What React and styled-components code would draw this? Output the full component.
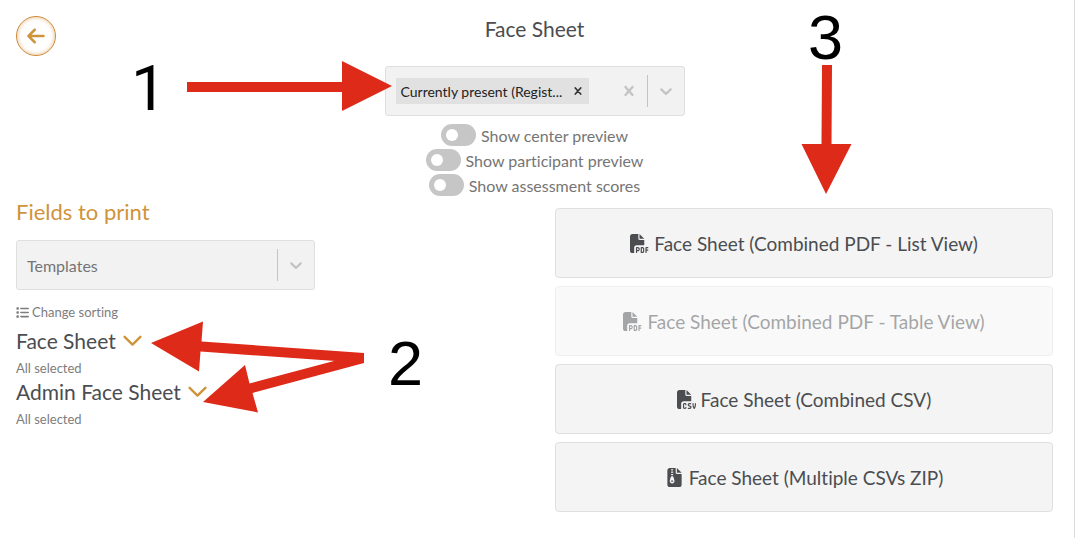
import React, { useState } from "react";
import styled, { createGlobalStyle } from "styled-components";
import {
  FaArrowLeft,
  FaFileCsv,
  FaFilePdf,
  FaFileZipper,
  FaList,
} from "react-icons/fa6";

const GlobalStyle = createGlobalStyle`
  * {
    box-sizing: border-box;
  }

  body {
    margin: 0;
    background: #fff;
    color: #4b4d50;
    font-family: Lato, "Open Sans", sans-serif;
    font-variant-ligatures: none;
  }

  button, input, select {
    font: inherit;
    font-variant-ligatures: none;
    color: inherit;
    margin: 0;
    padding: 0;
    border: 0;
    background: none;
  }

  button {
    cursor: pointer;
  }
`;

const Page = styled.main`
  position: relative;
  min-height: 100vh;
  margin-right: 1px;
  padding: 16px 21px 16px 16px;
  border-right: 1px solid #dcdcdc;
`;

const Header = styled.header`
  display: grid;
  grid-template-columns: 40px 1fr 40px;
  height: 50px;
`;

const BackLink = styled.a`
  display: flex;
  align-items: center;
  justify-content: center;
  width: 40px;
  height: 40px;
  border: 1px solid #cf8a35;
  border-radius: 50%;
  box-shadow: inset 0 0 4px #e3b98a;
  color: #cf933c;
  font-size: 20px;
`;

const Title = styled.h1`
  margin: 0;
  font-size: 21px;
  font-weight: 400;
  line-height: 26px;
  text-align: center;
`;

const Filters = styled.section`
  display: flex;
  flex-direction: column;
  align-items: center;
`;

const Control = styled.div`
  display: flex;
  align-items: center;
  width: ${({ $width }) => $width};
  height: 50px;
  padding-left: 10px;
  border: 1px solid #dfdfdf;
  border-radius: 3px;
  background: #f2f2f2;
`;

const Chip = styled.span`
  display: flex;
  align-items: center;
  justify-content: space-between;
  width: 193px;
  height: 26px;
  padding: 0 6px 0 5px;
  background: #e1e1e1;
  color: #222;
  font-size: 14px;
  white-space: nowrap;
`;

const IconButton = styled.button`
  display: flex;
  align-items: center;
  justify-content: center;
  width: ${({ $width }) => $width};
  height: 26px;
  color: ${({ $color }) => $color || "#c4c4c4"};
`;

const SearchInput = styled.input`
  flex: 1;
  min-width: 0;
  outline: none;
`;

const Separator = styled.span`
  width: 1px;
  height: 32px;
  background: #c4c4c4;
`;

const TemplateSelect = styled.select`
  flex: 1;
  height: 100%;
  appearance: none;
  color: #757575;
  font-size: 16px;
`;

const Indicator = styled.span`
  display: flex;
  justify-content: center;
  width: 36px;
  color: #c4c4c4;
`;

const Switches = styled.div`
  display: flex;
  flex-direction: column;
  align-items: center;
  gap: 3px;
  padding-top: 8px;
`;

const SwitchLabel = styled.label`
  display: flex;
  align-items: center;
  gap: 5px;
  height: 22px;
  color: #757575;
  font-size: 16px;
`;

const Switch = styled.input`
  appearance: none;
  display: flex;
  align-items: center;
  width: 35px;
  height: 22px;
  padding: 0 5px;
  border-radius: 11px;
  background: #c6c6c6;

  &::before {
    content: "";
    width: 12px;
    height: 12px;
    border-radius: 50%;
    background: #fff;
  }

  &:checked {
    justify-content: flex-end;
    background: #cf933c;
  }
`;

const Columns = styled.div`
  display: grid;
  grid-template-columns: 1fr 1fr;
  gap: 41px;
  padding-top: 12px;
`;

const Fields = styled.section`
  display: flex;
  flex-direction: column;
  align-items: flex-start;
`;

const FieldsTitle = styled.h2`
  margin: 0;
  padding-bottom: 24px;
  color: #cf933c;
  font-size: 22px;
  font-weight: 400;
  line-height: 8px;
`;

const SortButton = styled.button`
  display: flex;
  align-items: center;
  gap: 3px;
  margin: 14px 0 5px;
  color: #7d7d7d;
  font-size: 13px;
  line-height: 16px;
`;

const GroupButton = styled.button`
  display: flex;
  align-items: center;
  gap: 7px;
  padding-top: 3px;
  font-size: 21px;
  line-height: 26px;
`;

const GroupNote = styled.span`
  padding-top: 6px;
  color: #7d7d7d;
  font-size: 13px;
  line-height: 16px;
`;

const Exports = styled.section`
  display: flex;
  flex-direction: column;
  gap: 8px;
`;

const ExportButton = styled.button`
  display: flex;
  align-items: center;
  justify-content: center;
  gap: 5px;
  height: 70px;
  border: 1px solid #dfdfdf;
  border-radius: 4px;
  background: #f4f4f4;
  color: #4b4d50;
  font-size: 19px;

  &:disabled {
    opacity: 0.5;
    cursor: default;
  }
`;

const Annotations = styled.svg`
  position: absolute;
  top: 0;
  left: 0;
  pointer-events: none;
`;

const Step = styled.span`
  position: absolute;
  left: ${({ $x }) => $x}px;
  top: ${({ $y }) => $y}px;
  color: #000;
  font-family: ${({ $font }) => $font || '"Liberation Sans"'}, sans-serif;
  font-size: 63px;
  line-height: 62px;
`;

const Chevron = () => (
  <svg width="20" height="20" viewBox="0 0 20 20" fill="currentColor" aria-hidden="true">
    <path d="M4.516 7.548c0.436-0.446 1.043-0.481 1.576 0l3.908 3.747 3.908-3.747c0.533-0.481 1.141-0.446 1.574 0 0.436 0.445 0.408 1.197 0 1.615-0.406 0.418-4.695 4.502-4.695 4.502-0.217 0.223-0.502 0.335-0.787 0.335s-0.57-0.112-0.789-0.335c0 0-4.287-4.084-4.695-4.502s-0.436-1.17 0-1.615z" />
  </svg>
);

const Cross = ({ size }) => (
  <svg width={size} height={size} viewBox="0 0 20 20" fill="currentColor" aria-hidden="true">
    <path d="M14.348 14.849c-0.469 0.469-1.229 0.469-1.697 0l-2.651-3.030-2.651 3.029c-0.469 0.469-1.229 0.469-1.697 0-0.469-0.469-0.469-1.229 0-1.697l2.758-3.15-2.759-3.152c-0.469-0.469-0.469-1.228 0-1.697s1.228-0.469 1.697 0l2.652 3.031 2.651-3.031c0.469-0.469 1.228-0.469 1.697 0s0.469 1.229 0 1.697l-2.758 3.152 2.758 3.15c0.469 0.469 0.469 1.229 0 1.698z" />
  </svg>
);

const SmallCross = () => (
  <svg width="8" height="8" viewBox="0 0 8 8" fill="none" aria-hidden="true">
    <path d="M1.300 1 6.700 7M6.700 1 1.300 7" stroke="currentColor" strokeWidth="1.700" strokeLinecap="round" />
  </svg>
);

const GroupChevron = () => (
  <svg width="19" height="12" viewBox="0 0 19 12" fill="none" aria-hidden="true">
    <path d="M1.6 1.8 9.5 9.6l7.9-7.8" stroke="#cf933c" strokeWidth="2.4" strokeLinecap="round" strokeLinejoin="round" />
  </svg>
);

const switches = [
  { id: "center", label: "Show center preview" },
  { id: "participant", label: "Show participant preview" },
  { id: "scores", label: "Show assessment scores" },
];

const groups = ["Face Sheet", "Admin Face Sheet"];

const exportsList = [
  { label: "Face Sheet (Combined PDF - List View)", Icon: FaFilePdf },
  { label: "Face Sheet (Combined PDF - Table View)", Icon: FaFilePdf, disabled: true },
  { label: "Face Sheet (Combined CSV)", Icon: FaFileCsv },
  { label: "Face Sheet (Multiple CSVs ZIP)", Icon: FaFileZipper },
];

export default function App() {
  const [checked, setChecked] = useState({});

  return (
    <>
      <GlobalStyle />
      <Page>
        <Header>
          <BackLink href="#back" aria-label="Back">
            <FaArrowLeft />
          </BackLink>
          <Title>Face Sheet</Title>
        </Header>

        <Filters>
          <Control $width="300px">
            <Chip>
              Currently present (Regist...
              <IconButton type="button" $width="10px" $color="#333" aria-label="Remove Currently present">
                <SmallCross />
              </IconButton>
            </Chip>
            <SearchInput type="text" role="combobox" aria-expanded="false" aria-label="Status filter" />
            <IconButton type="button" $width="36px" aria-label="Clear all">
              <Cross size={20} />
            </IconButton>
            <Separator />
            <IconButton type="button" $width="36px" aria-haspopup="listbox" aria-label="Open status list">
              <Chevron />
            </IconButton>
          </Control>

          <Switches>
            {switches.map(({ id, label }) => (
              <SwitchLabel key={id} htmlFor={id}>
                <Switch
                  type="checkbox"
                  id={id}
                  checked={!!checked[id]}
                  onChange={(e) => setChecked({ ...checked, [id]: e.target.checked })}
                />
                {label}
              </SwitchLabel>
            ))}
          </Switches>
        </Filters>

        <Columns>
          <Fields>
            <FieldsTitle>Fields to print</FieldsTitle>
            <Control $width="60%">
              <TemplateSelect aria-label="Templates" defaultValue="">
                <option value="">Templates</option>
              </TemplateSelect>
              <Separator />
              <Indicator>
                <Chevron />
              </Indicator>
            </Control>
            <SortButton type="button">
              <FaList size={13} />
              Change sorting
            </SortButton>
            {groups.map((name) => (
              <React.Fragment key={name}>
                <GroupButton type="button" aria-expanded="false">
                  {name}
                  <GroupChevron />
                </GroupButton>
                <GroupNote>All selected</GroupNote>
              </React.Fragment>
            ))}
          </Fields>

          <Exports>
            {exportsList.map(({ label, Icon, disabled }) => (
              <ExportButton key={label} type="button" disabled={disabled}>
                <Icon size={19} />
                {label}
              </ExportButton>
            ))}
          </Exports>
        </Columns>

        <Annotations width="860" height="420" viewBox="0 0 860 420" fill="#de2a18" aria-hidden="true">
          <path d="M187 82H342V61L392 86 342 111V92H187Z" />
          <path d="M822 65H832L831.500 144H851.500L826 194 801.500 144H821.500Z" />
          <path d="M151 343 203 321.500 201.500 341.500 364 353V363L200.500 351.500 199 371.500Z" />
          <path d="M203 402 245 365 249.500 383.500 364 353V363L252.500 393 258 412.500Z" />
        </Annotations>
        <Step $x={131} $y={58} $font="Roboto">1</Step>
        <Step $x={388} $y={332}>2</Step>
        <Step $x={808} $y={6}>3</Step>
      </Page>
    </>
  );
}
